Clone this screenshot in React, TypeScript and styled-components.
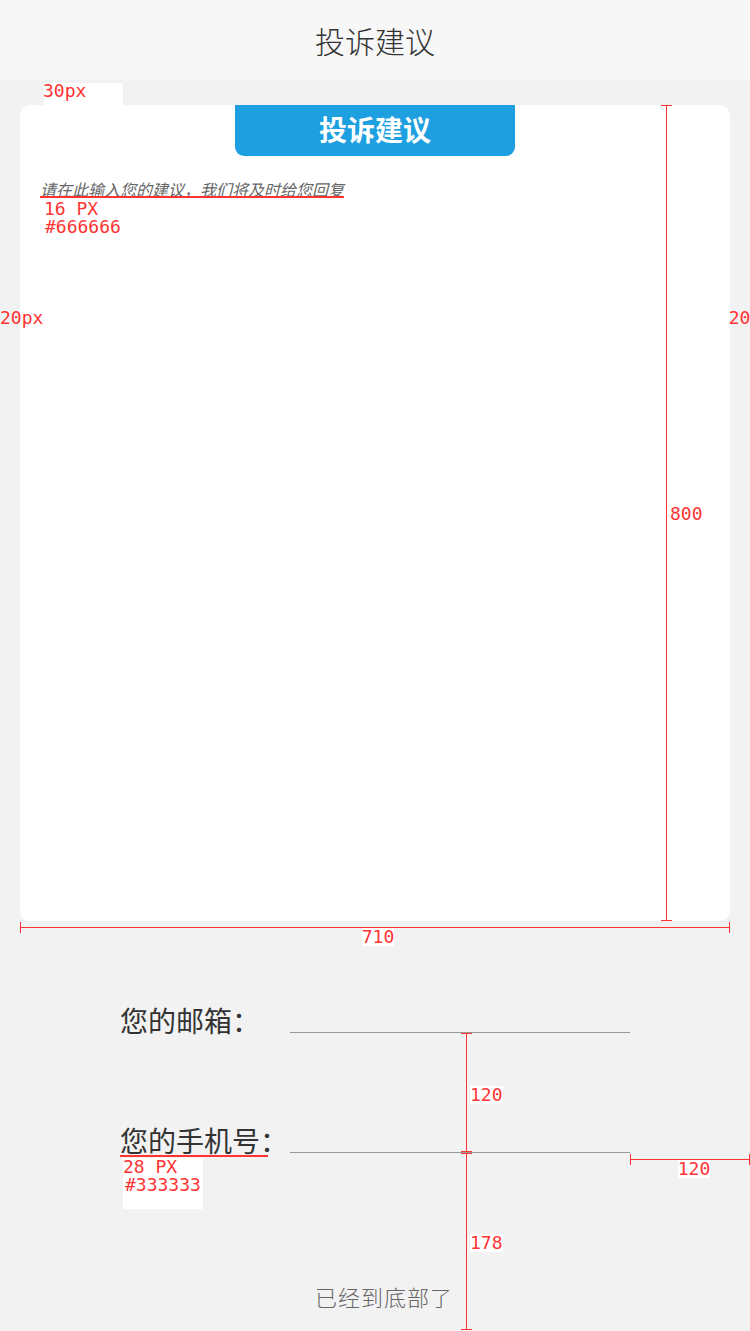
import React from "react";
import styled, { createGlobalStyle } from "styled-components";

const RED = "#ff3333";
const MONO = `"DejaVu Sans Mono", "Liberation Mono", monospace`;
const CJK = `"Noto Sans CJK SC", "Noto Sans", sans-serif`;

const GlobalStyle = createGlobalStyle`
  html, body {
    margin: 0;
    padding: 0;
    background: #f2f2f2;
  }
  body {
    font-family: ${CJK};
  }
`;

const Page = styled.div`
  position: relative;
  width: 750px;
  height: 1331px;
  overflow: hidden;
  background: #f2f2f2;
`;

const Header = styled.header`
  height: 80px;
  background: #f7f7f7;
  display: flex;
  align-items: center;
  justify-content: center;
  font-size: 30px;
  font-weight: 300;
  color: #333;
`;

const Main = styled.main`
  padding: 25px 20px 0;
`;

const Card = styled.section`
  height: 816px;
  background: #fff;
  border-radius: 10px;
  display: flex;
  flex-direction: column;
`;

const Tab = styled.h2`
  margin: 0 auto;
  width: 280px;
  height: 51px;
  background: #1ea0e0;
  color: #fff;
  border-radius: 0 0 9px 9px;
  font-size: 28px;
  font-weight: 700;
  line-height: 49px;
  text-align: center;
`;

const Suggestion = styled.textarea`
  flex: 1;
  border: 0;
  outline: none;
  resize: none;
  background: transparent;
  padding: 23px 20px 0;
  font-family: ${CJK};
  font-size: 16px;
  line-height: 20px;
  font-style: italic;
  color: #666;

  &::placeholder {
    color: #666;
    font-style: italic;
  }
`;

const Form = styled.div`
  padding: 85px 0 0 120px;
  display: flex;
  flex-direction: column;
  gap: 92px;
`;

const Row = styled.label`
  display: flex;
  align-items: flex-end;
  height: 28px;
`;

const Label = styled.span`
  width: 170px;
  font-size: 28px;
  line-height: 28px;
  color: #333;
`;

const Field = styled.input`
  width: 340px;
  height: 28px;
  margin: 0 0 1px;
  padding: 0;
  border: 0;
  border-bottom: 1px solid #999;
  background: transparent;
  outline: none;
  box-sizing: border-box;
  font-size: 22px;
`;

const Bottom = styled.p`
  margin: 131px 0 0;
  padding-left: 18px;
  text-align: center;
  font-size: 22px;
  line-height: 22px;
  letter-spacing: 1px;
  font-weight: 300;
  color: #666;
`;

/* design annotations laid over the page */

const Note = styled.span<{ $bg?: boolean; $indent?: number }>`
  display: block;
  padding-left: ${(p) => p.$indent ?? 0}px;
  font-family: ${MONO};
  font-size: 18px;
  line-height: 18px;
  color: ${RED};
  white-space: pre;
  background: ${(p) => (p.$bg ? "#fff" : "transparent")};
`;

const Spot = styled.div<{ $x: number; $y: number }>`
  position: absolute;
  left: ${(p) => p.$x}px;
  top: ${(p) => p.$y}px;
`;

const Tag = styled(Spot)`
  width: 79px;
  height: 22px;
  background: #fff;
  margin-left: 1px;

  ${Note} {
    margin: -1px 0 0 -1px;
  }
`;

const Spec = styled(Spot)<{ $w: number; $boxed?: boolean }>`
  display: flex;
  flex-direction: column;
  align-items: flex-start;

  &::before {
    content: "";
    width: ${(p) => p.$w}px;
    height: 2px;
    background: ${RED};
    margin-bottom: ${(p) => (p.$boxed ? 1 : 2)}px;
  }
`;

const SpecBox = styled.div`
  width: 80px;
  height: 51px;
  margin-left: 3px;
  background: #fff;
`;

const Sides = styled(Spot)`
  width: 772px;
  display: flex;
  justify-content: space-between;
`;

const VDim = styled(Spot)<{ $h: number; $shift?: number }>`
  width: 1px;
  height: ${(p) => p.$h}px;
  background: ${RED};
  display: flex;
  align-items: center;

  ${Note} {
    margin: ${(p) => (p.$shift ?? 0) * 2}px 0 0 ${(p) => 4 + 0}px;
  }

  &::before,
  &::after {
    content: "";
    position: absolute;
    left: -5px;
    width: 11px;
    height: 1px;
    background: ${RED};
  }
  &::before {
    top: 0;
  }
  &::after {
    bottom: 0;
  }
`;

const HDim = styled(Spot)<{ $w: number; $shift?: number }>`
  width: ${(p) => p.$w}px;
  height: 1px;
  background: ${RED};
  display: flex;
  justify-content: center;
  align-items: flex-start;

  ${Note} {
    margin: 1px 0 0 ${(p) => (p.$shift ?? 0) * 2}px;
  }

  &::before,
  &::after {
    content: "";
    position: absolute;
    top: -5px;
    width: 1px;
    height: 11px;
    background: ${RED};
  }
  &::before {
    left: 0;
  }
  &::after {
    right: 0;
  }
`;

const Annotations = () => (
  <>
    <Tag $x={43} $y={83}>
      <Note>30px</Note>
    </Tag>

    <Spec $x={40} $y={196} $w={304}>
      <Note $indent={4}>16 PX</Note>
      <Note $indent={5}>#666666</Note>
    </Spec>

    <Sides $x={0} $y={309}>
      <Note>20px</Note>
      <Note>20px</Note>
    </Sides>

    <VDim $x={666} $y={105} $h={816} $shift={1}>
      <Note $bg>800</Note>
    </VDim>

    <HDim $x={20} $y={927} $w={710} $shift={3}>
      <Note $bg>710</Note>
    </HDim>

    <VDim $x={466} $y={1033} $h={119} $shift={2}>
      <Note $bg>120</Note>
    </VDim>
    <VDim $x={466} $y={1153} $h={177} $shift={1}>
      <Note $bg>178</Note>
    </VDim>

    <HDim $x={630} $y={1159} $w={120} $shift={4}>
      <Note $bg>120</Note>
    </HDim>

    <Spec $x={120} $y={1155} $w={148} $boxed>
      <SpecBox>
        <Note>28 PX</Note>
        <Note $indent={2}>#333333</Note>
      </SpecBox>
    </Spec>
  </>
);

const App = (): JSX.Element => (
  <Page>
    <GlobalStyle />
    <Header>投诉建议</Header>
    <Main>
      <Card>
        <Tab>投诉建议</Tab>
        <Suggestion placeholder="请在此输入您的建议，我们将及时给您回复" />
      </Card>
    </Main>
    <Form>
      <Row>
        <Label>您的邮箱：</Label>
        <Field type="email" />
      </Row>
      <Row>
        <Label>您的手机号：</Label>
        <Field type="tel" />
      </Row>
    </Form>
    <Bottom>已经到底部了</Bottom>
    <Annotations />
  </Page>
);

export default App;
